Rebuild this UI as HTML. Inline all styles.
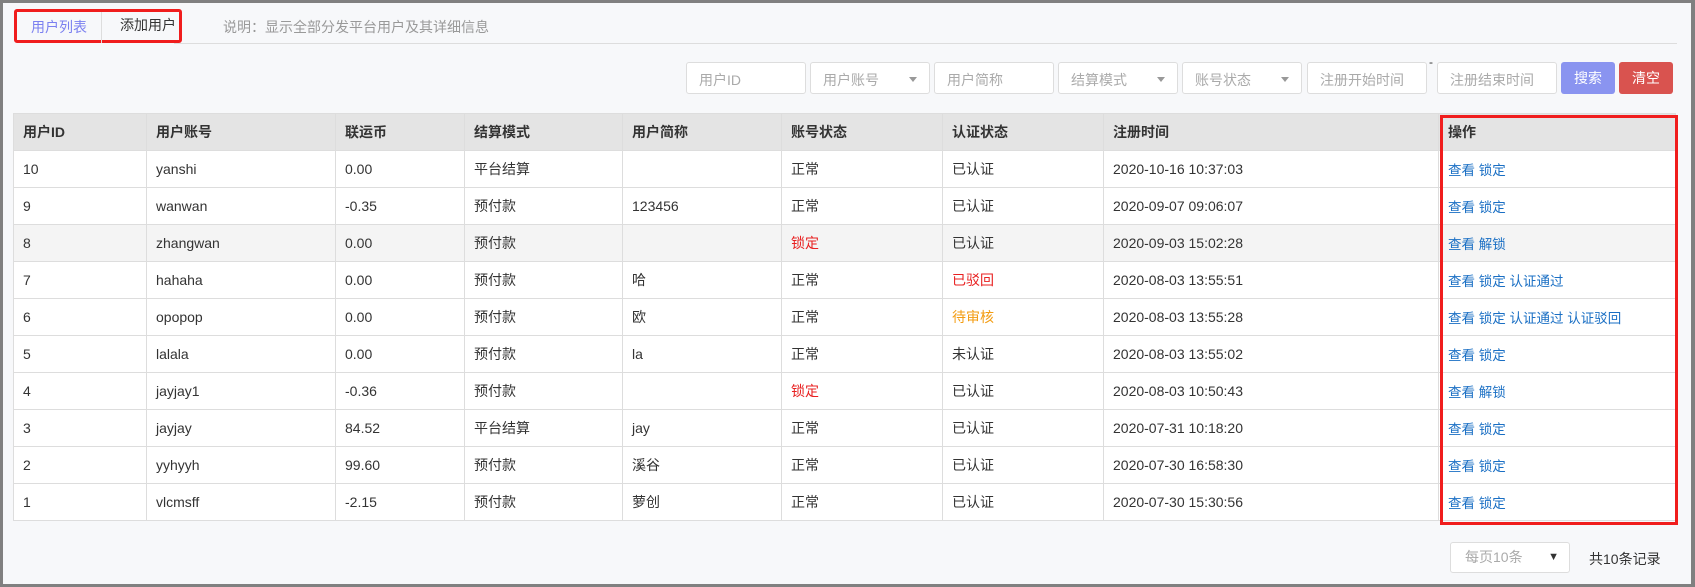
<!DOCTYPE html>
<html><head><meta charset="utf-8"><style>
*{box-sizing:border-box;margin:0;padding:0}
body{width:1695px;height:587px;background:#808080;font-family:"Liberation Sans","Noto Sans CJK SC",sans-serif;overflow:hidden;position:relative}
.page{position:absolute;left:3px;top:3px;width:1688px;height:581px;background:#f7f8fa}
.abs{position:absolute}
.tabs{left:11px;top:6px;width:168px;height:34px;border:3px solid #f01d1d;border-radius:3px}
.tab1{left:28px;top:14px;font-size:14px;color:#7b80f0}
.tabsep{left:98px;top:9px;width:1px;height:31px;background:#ddd}
.tab2{left:117px;top:12px;font-size:14px;color:#333}
.desc{left:220px;top:14px;font-size:14px;color:#999}
.hline{left:171px;top:40px;width:1503px;height:1px;background:#ddd}
.inp{height:32px;top:59px;background:#fff;border:1px solid #ddd;border-radius:3px;font-size:14px;color:#aaa;padding:7px 12px;width:120px}
.sel::after{content:"";position:absolute;right:12px;top:14px;border:4px solid transparent;border-top:5px solid #999}
.btn{top:59px;height:32px;width:54px;border-radius:3px;color:#fff;font-size:14px;text-align:center;line-height:32px}
table{position:absolute;left:10px;top:110px;width:1663px;border-collapse:collapse;font-size:14px;color:#333;background:#fff}
th{background:#e4e4e4;text-align:left;height:37px;padding:0 9px;font-weight:bold;border:1px solid #ddd;font-size:14px}
td{height:37px;padding:0 9px;border:1px solid #ddd}
tr.g td{background:#f4f4f4}
.l{color:#1a6fc4;font-size:13.5px}
.r{color:#e82020}.o{color:#f39c12}
.redbox{top:112px;width:238px;height:410px;border:3px solid #f01d1d}
</style></head><body>
<div class="page">
<div class="abs tabs"></div>
<div class="abs tabsep"></div>
<div class="abs tab1">用户列表</div>
<div class="abs tab2">添加用户</div>
<div class="abs desc">说明：显示全部分发平台用户及其详细信息</div>
<div class="abs hline"></div>
<div class="abs inp" style="left:683px">用户ID</div>
<div class="abs inp sel" style="left:807px">用户账号</div>
<div class="abs inp" style="left:931px">用户简称</div>
<div class="abs inp sel" style="left:1055px">结算模式</div>
<div class="abs inp sel" style="left:1179px">账号状态</div>
<div class="abs inp" style="left:1304px">注册开始时间</div>
<div class="abs" style="left:1426px;top:52px;font-size:12px;color:#333">-</div>
<div class="abs inp" style="left:1434px">注册结束时间</div>
<div class="abs btn" style="left:1558px;background:#8a94f0">搜索</div>
<div class="abs btn" style="left:1616px;background:#d9534f">清空</div>
<table>
<colgroup><col style="width:133px"><col style="width:189px"><col style="width:129px"><col style="width:158px"><col style="width:159px"><col style="width:161px"><col style="width:161px"><col style="width:335px"><col></colgroup>
<tr><th>用户ID</th><th>用户账号</th><th>联运币</th><th>结算模式</th><th>用户简称</th><th>账号状态</th><th>认证状态</th><th>注册时间</th><th>操作</th></tr>
<tr><td>10</td><td>yanshi</td><td>0.00</td><td>平台结算</td><td></td><td>正常</td><td>已认证</td><td>2020-10-16 10:37:03</td><td class="l">查看 锁定</td></tr>
<tr><td>9</td><td>wanwan</td><td>-0.35</td><td>预付款</td><td>123456</td><td>正常</td><td>已认证</td><td>2020-09-07 09:06:07</td><td class="l">查看 锁定</td></tr>
<tr class="g"><td>8</td><td>zhangwan</td><td>0.00</td><td>预付款</td><td></td><td class="r">锁定</td><td>已认证</td><td>2020-09-03 15:02:28</td><td class="l">查看 解锁</td></tr>
<tr><td>7</td><td>hahaha</td><td>0.00</td><td>预付款</td><td>哈</td><td>正常</td><td class="r">已驳回</td><td>2020-08-03 13:55:51</td><td class="l">查看 锁定 认证通过</td></tr>
<tr><td>6</td><td>opopop</td><td>0.00</td><td>预付款</td><td>欧</td><td>正常</td><td class="o">待审核</td><td>2020-08-03 13:55:28</td><td class="l">查看 锁定 认证通过 认证驳回</td></tr>
<tr><td>5</td><td>lalala</td><td>0.00</td><td>预付款</td><td>la</td><td>正常</td><td>未认证</td><td>2020-08-03 13:55:02</td><td class="l">查看 锁定</td></tr>
<tr><td>4</td><td>jayjay1</td><td>-0.36</td><td>预付款</td><td></td><td class="r">锁定</td><td>已认证</td><td>2020-08-03 10:50:43</td><td class="l">查看 解锁</td></tr>
<tr><td>3</td><td>jayjay</td><td>84.52</td><td>平台结算</td><td>jay</td><td>正常</td><td>已认证</td><td>2020-07-31 10:18:20</td><td class="l">查看 锁定</td></tr>
<tr><td>2</td><td>yyhyyh</td><td>99.60</td><td>预付款</td><td>溪谷</td><td>正常</td><td>已认证</td><td>2020-07-30 16:58:30</td><td class="l">查看 锁定</td></tr>
<tr><td>1</td><td>vlcmsff</td><td>-2.15</td><td>预付款</td><td>萝创</td><td>正常</td><td>已认证</td><td>2020-07-30 15:30:56</td><td class="l">查看 锁定</td></tr>
</table>
<div class="abs redbox" style="left:1437px"></div>
<div class="abs" style="left:1447px;top:539px;width:120px;height:31px;background:#fff;border:1px solid #ddd;border-radius:3px;font-size:14px;color:#aaa;padding:0 14px;line-height:29px">每页10条<span style="position:absolute;right:10px;top:0;color:#333;font-size:11px">▼</span></div>
<div class="abs" style="left:1586px;top:546px;font-size:14px;color:#333">共10条记录</div>
</div>
</body></html>
